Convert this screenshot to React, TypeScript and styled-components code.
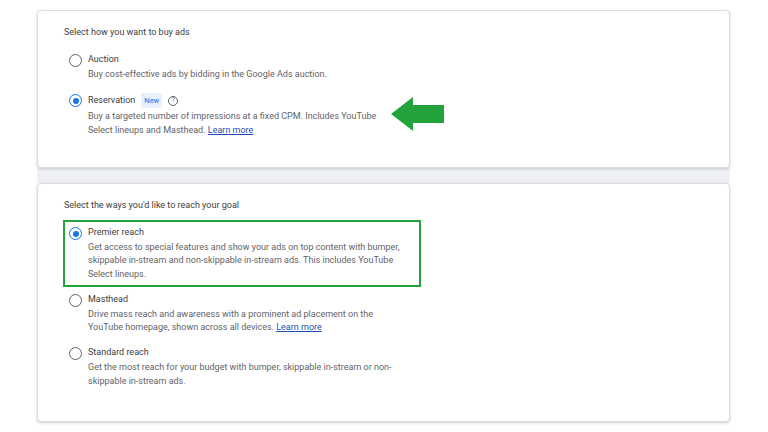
import React from "react";
import styled, { createGlobalStyle } from "styled-components";

const Global = createGlobalStyle`
  body { margin: 0; background: #fff; font-family: Roboto, "Liberation Sans", sans-serif; }
`;

const Page = styled.div`
  width: 768px;
  height: 432px;
  padding: 10px 0 0 37px;
  box-sizing: border-box;
`;

const Column = styled.div`
  width: 693px;
  display: flex;
  flex-direction: column;
`;

const Card = styled.div<{ $h: number }>`
  position: relative;
  height: ${(p) => p.$h}px;
  box-sizing: border-box;
  background: #fff;
  border: 1px solid #dadce0;
  border-radius: 4px;
  box-shadow: 0 1px 3px rgba(60, 64, 67, 0.25);
  padding: 15px 0 0 26px;
`;

const Gap = styled.div`
  height: 15px;
  background: #eef0f3;
`;

const Heading = styled.div<{ $mb: number }>`
  font-size: 9px;
  color: #3c4043;
  line-height: 12px;
  margin-bottom: ${(p) => p.$mb}px;
`;

const Option = styled.div<{ $boxed?: boolean }>`
  display: flex;
  gap: 6px;
  width: 350px;
  padding: ${(p) => (p.$boxed ? "4px 0 4px 4px" : "0 0 0 5px")};
  margin-left: ${(p) => (p.$boxed ? "-1px" : "0")};
  border: ${(p) => (p.$boxed ? "2px solid #22a33c" : "none")};
  margin-bottom: ${(p) => (p.$boxed ? "6px" : "12px")};
`;

const Radio = styled.div<{ $on?: boolean }>`
  flex: none;
  width: 11px;
  height: 11px;
  border-radius: 50%;
  border: 1.5px solid ${(p) => (p.$on ? "#1a73e8" : "#5f6368")};
  margin-top: 1px;
  display: flex;
  align-items: center;
  justify-content: center;
  &::after {
    content: "";
    width: 6px;
    height: 6px;
    border-radius: 50%;
    background: ${(p) => (p.$on ? "#1a73e8" : "transparent")};
  }
`;

const Body = styled.div`
  display: flex;
  flex-direction: column;
`;

const Label = styled.div`
  font-size: 9px;
  color: #3c4043;
  line-height: 13px;
  display: flex;
  align-items: center;
  gap: 6px;
  margin-bottom: 2px;
`;

const Desc = styled.div<{ $w: number }>`
  font-size: 9px;
  color: #5f6368;
  line-height: 13.3px;
  max-width: ${(p) => p.$w}px;
`;

const Link = styled.a`
  color: #1a4fb0;
  text-decoration: underline;
`;

const Badge = styled.span`
  background: #e8f0fe;
  color: #1a73e8;
  font-size: 7.5px;
  padding: 1px 3px;
  border-radius: 2px;
`;

const Help = styled.span`
  width: 8px;
  height: 8px;
  border: 1px solid #5f6368;
  border-radius: 50%;
  font-size: 6.5px;
  color: #5f6368;
  display: inline-flex;
  align-items: center;
  justify-content: center;
`;

const Arrow = styled.svg`
  position: absolute;
  left: 353px;
  top: 86px;
`;

export default function App() {
  return (
    <Page>
      <Global />
      <Column>
        <Card $h={158}>
          <Heading $mb={15}>Select how you want to buy ads</Heading>
          <Option>
            <Radio />
            <Body>
              <Label>Auction</Label>
              <Desc $w={320}>Buy cost-effective ads by bidding in the Google Ads auction.</Desc>
            </Body>
          </Option>
          <Option>
            <Radio $on />
            <Body>
              <Label>
                Reservation <Badge>New</Badge> <Help>?</Help>
              </Label>
              <Desc $w={298}>
                Buy a targeted number of impressions at a fixed CPM. Includes YouTube Select lineups and Masthead.{" "}
                <Link>Learn more</Link>
              </Desc>
            </Body>
          </Option>
          <Arrow width="53" height="34" viewBox="0 0 53 34">
            <path d="M0 17 L22 0 L22 8 L53 8 L53 26 L22 26 L22 34 Z" fill="#22a33c" />
          </Arrow>
        </Card>
        <Gap />
        <Card $h={239}>
          <Heading $mb={9}>Select the ways you'd like to reach your goal</Heading>
          <Option $boxed>
            <Radio $on />
            <Body>
              <Label>Premier reach</Label>
              <Desc $w={322}>
                Get access to special features and show your ads on top content with bumper, skippable in-stream and
                non-skippable in-stream ads. This includes YouTube Select lineups.
              </Desc>
            </Body>
          </Option>
          <Option>
            <Radio />
            <Body>
              <Label>Masthead</Label>
              <Desc $w={300}>
                Drive mass reach and awareness with a prominent ad placement on the YouTube homepage, shown across all
                devices. <Link>Learn more</Link>
              </Desc>
            </Body>
          </Option>
          <Option>
            <Radio />
            <Body>
              <Label>Standard reach</Label>
              <Desc $w={318}>
                Get the most reach for your budget with bumper, skippable in-stream or non-skippable in-stream ads.
              </Desc>
            </Body>
          </Option>
        </Card>
      </Column>
    </Page>
  );
}
